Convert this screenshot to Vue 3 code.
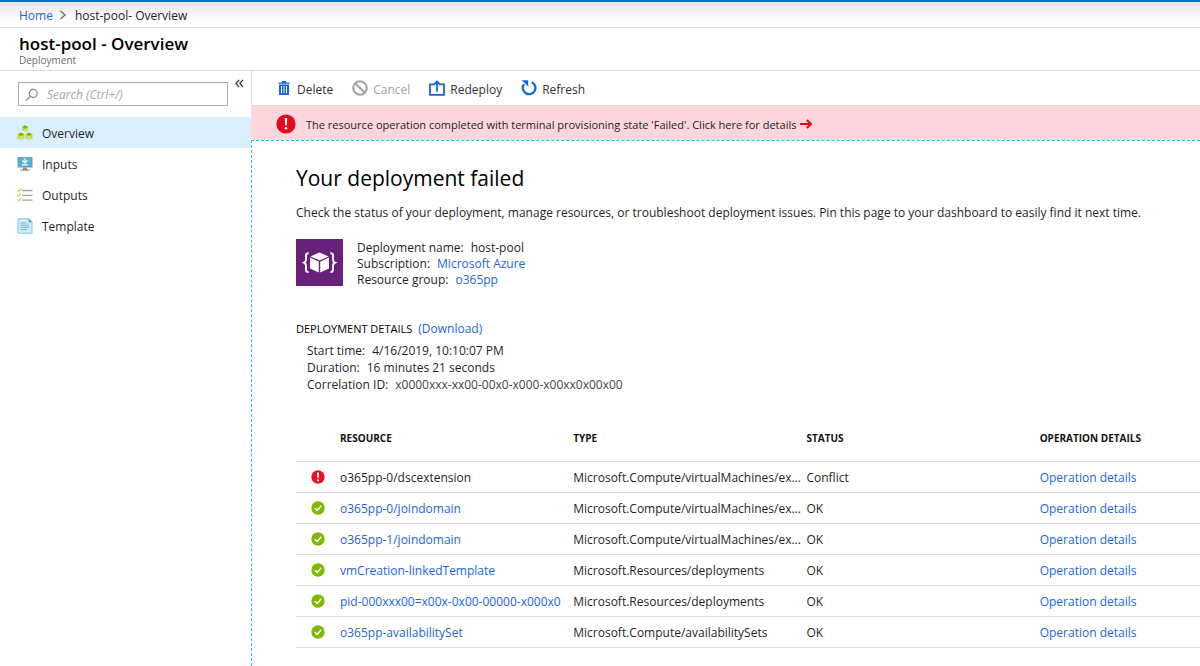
<script setup>
import { ref } from 'vue'

const search = ref('')

const navItems = ['Overview', 'Inputs', 'Outputs', 'Template']

const rows = [
  { ok: false, name: 'o365pp-0/dscextension', type: 'Microsoft.Compute/virtualMachines/ex...', status: 'Conflict' },
  { ok: true, name: 'o365pp-0/joindomain', type: 'Microsoft.Compute/virtualMachines/ex...', status: 'OK' },
  { ok: true, name: 'o365pp-1/joindomain', type: 'Microsoft.Compute/virtualMachines/ex...', status: 'OK' },
  { ok: true, name: 'vmCreation-linkedTemplate', type: 'Microsoft.Resources/deployments', status: 'OK' },
  { ok: true, name: 'pid-000xxx00=x00x-0x00-00000-x000x0', type: 'Microsoft.Resources/deployments', status: 'OK' },
  { ok: true, name: 'o365pp-availabilitySet', type: 'Microsoft.Compute/availabilitySets', status: 'OK' }
]
</script>

<template>
  <div class="page">
    <nav class="crumbs" aria-label="Breadcrumb">
      <a href="#">Home</a>
      <svg class="crumb-sep" width="8" height="10" viewBox="0 0 8 10"><path d="M1.5 1l4.5 4-4.5 4" fill="none" stroke="#666" stroke-width="1.2" /></svg>
      <span>host-pool- Overview</span>
    </nav>

    <header class="title">
      <h1>host-pool - Overview</h1>
      <p>Deployment</p>
    </header>

    <div class="body">
      <aside class="side">
        <div class="search-row">
          <label class="search">
            <svg width="14" height="14" viewBox="0 0 14 14" fill="none" stroke="#8a8a8a" stroke-width="1.2"><circle cx="8.2" cy="6.4" r="4" /><path d="M5.4 9.3L1 13.6" /></svg>
            <input v-model="search" type="text" placeholder="Search (Ctrl+/)" aria-label="Search" />
          </label>
          <button class="collapse" type="button" aria-label="Collapse menu">
            <svg width="9" height="9" viewBox="0 0 9 9" fill="none" stroke="#333" stroke-width="1.2"><path d="M4.2 0.8L1 4.5l3.2 3.7M8 0.8L4.8 4.5 8 8.2" /></svg>
          </button>
        </div>
        <ul class="menu">
          <li v-for="(item, i) in navItems" :key="item">
            <a href="#" :class="{ active: i === 0 }">
              <svg v-if="i === 0" width="16" height="16" viewBox="0 0 16 16">
                <g fill="#c3dd5b">
                  <path d="M8 0.5l3 1.6v3.5L8 7.4 5 5.6V2.1z" />
                  <path d="M4 7.6l3.6 1.8v4L4 15.4 0.4 13.4v-4z" />
                  <path d="M12 7.6l3.6 1.8v4L12 15.4l-3.6-2v-4z" />
                </g>
                <g fill="#7fba00">
                  <path d="M8 0.3l3.1 1.7L8 3.9 4.9 2z" />
                  <path d="M4 7.4l3.3 1.9L4 11.2 0.8 9.3z" />
                  <path d="M12 7.4l3.3 1.9-3.3 1.9-3.2-1.9z" />
                </g>
                <g stroke="#f3f9df" stroke-width="0.6"><path d="M8 3.9v3.4M4 11.2v4M12 11.2v4" /></g>
              </svg>
              <svg v-else-if="i === 1" width="16" height="16" viewBox="0 0 16 16">
                <path d="M0.5 1h15v10.5H0.5z" fill="#8b8f92" />
                <path d="M1.5 1.5h13v9h-13z" fill="#4fb3dc" />
                <path d="M6 11.5h4v2h2.5v1.3h-9v-1.3H6z" fill="#8b8f92" />
                <path d="M8 2v4.6M5.6 4.5L8 6.9l2.4-2.4M5 8.8h6" fill="none" stroke="#fff" stroke-width="1.3" />
              </svg>
              <svg v-else-if="i === 2" width="16" height="16" viewBox="0 0 16 16" fill="none">
                <path d="M5 3.5h10.5M5 8.3h10.5M5 13.1h10.5" stroke="#a5a5a5" stroke-width="1.3" />
                <path d="M0.6 3l1.2 1.4L4 1.6M0.6 7.8l1.2 1.4L4 6.4M0.6 12.6L1.8 14 4 11.2" stroke="#b8d432" stroke-width="1.1" />
              </svg>
              <svg v-else width="16" height="16" viewBox="0 0 16 16">
                <path d="M1 0.8h11l3 3v11.4H1z" fill="#d5eef7" stroke="#7cc4df" stroke-width="1" />
                <path d="M11.6 0.6l3.6 3.6h-3.6z" fill="#3ba3cb" />
                <path d="M3.6 5h6M3.6 7.2h8.8M3.6 9.4h8.8M3.6 11.6h6.5" stroke="#62b6d6" stroke-width="1" />
              </svg>
              <span>{{ item }}</span>
            </a>
          </li>
        </ul>
      </aside>

      <div class="main">
        <div class="toolbar">
          <button type="button">
            <svg width="12" height="14" viewBox="0 0 12 14" fill="#1464dc"><path d="M4 0h4v1.4h3.6v1.3H0.4V1.4H4z" /><path fill-rule="evenodd" d="M1 3.5h10V14H1zM3 5v7.3h1V5zM5.5 5v7.3h1V5zM8 5v7.3h1V5z" /></svg>
            <span>Delete</span>
          </button>
          <button type="button" class="cancel" disabled>
            <svg width="16" height="16" viewBox="0 0 16 16" fill="none" stroke="#a3a3a3" stroke-width="2"><circle cx="8" cy="8" r="6.8" /><path d="M3.2 3.2l9.6 9.6" /></svg>
            <span>Cancel</span>
          </button>
          <button type="button">
            <svg width="16" height="16" viewBox="0 0 16 16" fill="none" stroke="#1464dc" stroke-width="1.8"><path d="M4.2 4.4H1v10.400h14V4.400h-3.200M8 11.800V1.800M4.400 5L8 1.400 11.600 5" /></svg>
            <span>Redeploy</span>
          </button>
          <button type="button">
            <svg width="16" height="16" viewBox="0 0 16 16"><path d="M10.8 2.2A6.3 6.3 0 1 1 3 4.2" fill="none" stroke="#1464dc" stroke-width="2.2" /><path d="M0.8 0.2h6.4v6.4z" fill="#1464dc" /></svg>
            <span>Refresh</span>
          </button>
        </div>

        <a class="alert" href="#">
          <svg width="20" height="20" viewBox="0 0 20 20"><circle cx="10" cy="10" r="9.6" fill="#e3081b" /><path d="M8.8 4h2.400l-.4 7.600H9.200z" fill="#fff" /><circle cx="10" cy="14.300" r="1.300" fill="#fff" /></svg>
          <span>The resource operation completed with terminal provisioning state 'Failed'. Click here for details</span>
          <svg class="arrow" width="12" height="10" viewBox="0 0 12 10" fill="none" stroke="#e3081b" stroke-width="2"><path d="M0 5h10.600M6.800 1L11 5 6.800 9" /></svg>
        </a>

        <main class="content">
          <h2>Your deployment failed</h2>
          <p class="lead">Check the status of your deployment, manage resources, or troubleshoot deployment issues. Pin this page to your dashboard to easily find it next time.</p>

          <section class="summary">
            <svg width="47" height="47" viewBox="0 0 47 47">
              <path d="M0 0h47v47H0z" fill="#68217a" />
              <path d="M23.500 13.400l9 4-9 4.200-9-4.200z" fill="#fff" />
              <path d="M14 18.600l8.800 4.200v10.800L14 29.400zM33 18.600l-8.800 4.200v10.800l8.800-4.200z" fill="#fff" />
              <path d="M12.600 14.300c-2 0-2.600.7-2.600 2.300v3.600c0 1.900-.5 2.900-2 3.500 1.500.6 2 1.600 2 3.500v3.600c0 1.600.6 2.300 2.600 2.300M34.400 14.300c2 0 2.600.7 2.600 2.300v3.600c0 1.900.5 2.900 2 3.500-1.500.6-2 1.600-2 3.500v3.600c0 1.600-.6 2.300-2.600 2.300" fill="none" stroke="#fff" stroke-width="1.900" />
            </svg>
            <dl>
              <div><dt>Deployment name:</dt><dd>host-pool</dd></div>
              <div><dt>Subscription:</dt><dd><a href="#">Microsoft Azure</a></dd></div>
              <div><dt>Resource group:</dt><dd><a href="#">o365pp</a></dd></div>
            </dl>
          </section>

          <section class="details">
            <div class="details-head"><h3>DEPLOYMENT DETAILS</h3><a href="#">(Download)</a></div>
            <dl>
              <div><dt>Start time:</dt><dd>4/16/2019, 10:10:07 PM</dd></div>
              <div><dt>Duration:</dt><dd>16 minutes 21 seconds</dd></div>
              <div><dt>Correlation ID:</dt><dd class="id">x0000xxx-xx00-00x0-x000-x00xx0x00x00</dd></div>
            </dl>
          </section>

          <table>
            <colgroup><col class="c-icon" /><col class="c-wide" /><col class="c-wide" /><col class="c-wide" /><col /></colgroup>
            <thead>
              <tr><th></th><th>RESOURCE</th><th>TYPE</th><th>STATUS</th><th>OPERATION DETAILS</th></tr>
            </thead>
            <tbody>
              <tr v-for="row in rows" :key="row.name">
                <td class="state">
                  <svg v-if="row.ok" width="14" height="14" viewBox="0 0 14 14"><circle cx="7" cy="7" r="6.700" fill="#7fba00" /><path d="M3.800 7.200l2.300 2.200 4.200-4.600" fill="none" stroke="#fff" stroke-width="1.500" /></svg>
                  <svg v-else width="14" height="14" viewBox="0 0 14 14"><circle cx="7" cy="7" r="6.700" fill="#e81123" /><path d="M6 2.600h2l-.3 5.500H6.300z" fill="#fff" /><circle cx="7" cy="10.300" r="1.100" fill="#fff" /></svg>
                </td>
                <td><a v-if="row.ok" href="#">{{ row.name }}</a><template v-else>{{ row.name }}</template></td>
                <td>{{ row.type }}</td>
                <td>{{ row.status }}</td>
                <td><a href="#">Operation details</a></td>
              </tr>
            </tbody>
          </table>
        </main>
      </div>
    </div>
  </div>
</template>

<style>
body {
  margin: 0;
  background: #fff;
}
</style>

<style scoped>
.page {
  display: flex;
  flex-direction: column;
  min-height: 100vh;
  box-sizing: border-box;
  border-top: 2px solid #0f6fd0;
  font-family: "Segoe UI", "Open Sans", "Noto Sans", sans-serif;
  font-size: 12px;
  line-height: 16px;
  color: #1f1f1f;
  overflow: hidden;
}
h1, h2, h3, p, dl, dd, ul {
  margin: 0;
  padding: 0;
}
a {
  color: #1b66dd;
  text-decoration: none;
}
svg {
  flex: none;
  display: block;
}
button {
  font: inherit;
  border: 0;
  padding: 0;
  background: none;
  cursor: pointer;
}
.crumbs {
  display: flex;
  align-items: center;
  height: 25px;
  padding: 0 19px;
  border-bottom: 1px solid #e0e0e0;
  background: linear-gradient(#e6e6e6, #fff 80%);
}
.crumbs a, .crumbs span {
  padding-top: 2px;
}
.crumb-sep {
  margin: 0 8px 0 6px;
}
.title {
  height: 42px;
  padding: 0 19px;
  border-bottom: 1px solid #dcdcdc;
}
.title h1 {
  padding-top: 6px;
  font-size: 17px;
  line-height: 20px;
  font-weight: 600;
  color: #000;
}
.title p {
  font-size: 10px;
  line-height: 12px;
  color: #6a6a6a;
}
.body {
  flex: 1;
  display: flex;
}
.side {
  width: 251px;
  flex: none;
}
.search-row {
  display: flex;
  align-items: flex-start;
  padding: 11px 7px 11px 18px;
}
.search {
  flex: 1;
  display: flex;
  align-items: center;
  gap: 8px;
  height: 22px;
  padding: 0 6px;
  border: 1px solid #ababab;
}
.search input {
  flex: 1;
  min-width: 0;
  border: 0;
  padding: 1px 0 0;
  outline: 0;
  font: inherit;
  background: none;
}
.search input::placeholder {
  font-style: italic;
  color: #a6a6a6;
}
.collapse {
  margin-left: 7px;
  margin-top: -3px;
}
.menu {
  list-style: none;
}
.menu a {
  display: flex;
  align-items: center;
  gap: 9px;
  height: 31px;
  padding-left: 17px;
  color: #1f1f1f;
}
.menu a.active {
  background: #dceffe;
}
.menu span {
  padding-top: 2px;
}
.main {
  flex: 1;
  min-width: 0;
  display: flex;
  flex-direction: column;
}
.toolbar {
  display: flex;
  align-items: center;
  gap: 19px;
  height: 34px;
  padding-left: 26px;
  border-left: 1px solid #dcdcdc;
  border-bottom: 1px solid #dcdcdc;
}
.toolbar button {
  display: flex;
  align-items: center;
  gap: 5px;
  color: #333;
}
.toolbar button:first-child {
  gap: 7px;
}
.toolbar span {
  padding-top: 3px;
}
.toolbar .cancel {
  color: #a3a3a3;
}
.alert {
  display: flex;
  align-items: center;
  height: 33px;
  padding: 1px 0 0 25px;
  background: #fcd6da;
  color: #1f1f1f;
  font-size: 11px;
}
.alert span {
  margin-left: 10px;
  padding-top: 2px;
}
.arrow {
  margin-left: 4px;
}
.content {
  flex: 1;
  padding-left: 44px;
  border-top: 1px dashed #2fbdec;
  border-left: 1px dashed #2fbdec;
}
.content h2 {
  padding-top: 22px;
  font-size: 21px;
  line-height: 30px;
  font-weight: 400;
  color: #000;
}
.lead {
  margin-top: 12px;
}
.summary {
  display: flex;
  gap: 14px;
  margin-top: 18px;
}
dl div {
  display: flex;
  gap: 7px;
}
.summary dl {
  padding-top: 1px;
}
.details {
  margin-top: 33px;
}
.details-head {
  display: flex;
  gap: 6px;
}
.details h3 {
  font-size: 11px;
  line-height: 16px;
  font-weight: 500;
  color: #000;
}
.details dl {
  padding: 5px 0 0 11px;
  line-height: 17px;
}
.id {
  color: #444;
}
table {
  width: 100%;
  margin-top: 22px;
  table-layout: fixed;
  border-collapse: collapse;
}
.c-icon {
  width: 44px;
}
.c-wide {
  width: 25.8%;
}
th {
  height: 46px;
  padding: 0;
  border-bottom: 1px solid #dcdcdc;
  text-align: left;
  font-size: 10px;
  font-weight: 700;
  color: #111;
}
td {
  height: 28px;
  padding: 2px 0 0;
  border-bottom: 1px solid #dcdcdc;
  white-space: nowrap;
}
.state {
  height: 30px;
  padding: 0 0 0 15px;
}
</style>
